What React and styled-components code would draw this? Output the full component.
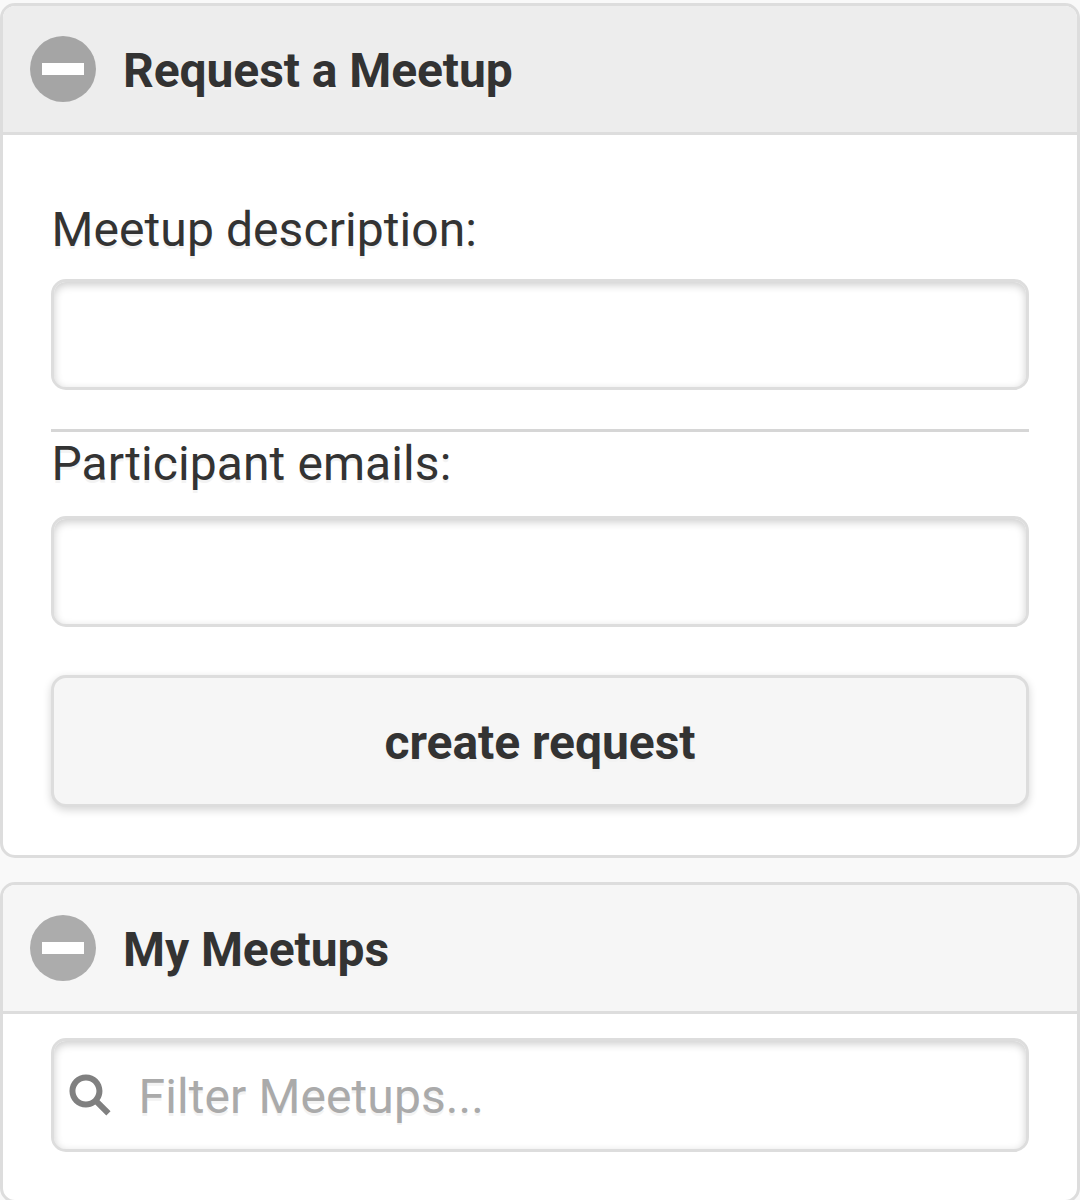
import React from "react";
import styled, { createGlobalStyle } from "styled-components";

const GlobalStyle = createGlobalStyle`
  *, *::before, *::after { box-sizing: border-box; }
  body {
    margin: 0;
    background: #f9f9f9;
    color: #333;
    font-family: Roboto, "Liberation Sans", sans-serif;
    font-size: 48px;
    line-height: 60px;
    text-shadow: 0 3px 0 #f3f3f3;
  }
`;

const Page = styled.main`
  display: flex;
  flex-direction: column;
  gap: 24px;
  height: 1200px;
  padding-top: 3px;
  overflow: hidden;
`;

const Panel = styled.section`
  flex: none;
  border: 3px solid #ddd;
  border-radius: 15px;
  background: #fff;
  overflow: hidden;
`;

const PanelHeader = styled.header`
  display: flex;
  align-items: center;
  gap: 27px;
  height: 129px;
  padding-left: 27px;
  border-bottom: 3px solid #ddd;
  background: ${({ $active }) => ($active ? "#ededed" : "#f6f6f6")};
`;

const MinusDisc = styled.span`
  display: flex;
  align-items: center;
  justify-content: center;
  width: 66px;
  height: 66px;
  border-radius: 50%;
  background: rgba(0, 0, 0, 0.3);

  &::before {
    content: "";
    width: 42px;
    height: 12px;
    background: #fff;
  }
`;

const PanelTitle = styled.h2`
  margin: 0;
  padding-top: 3px;
  font-size: 48px;
  font-weight: 700;
  letter-spacing: -0.08px;
`;

const Form = styled.form`
  display: flex;
  flex-direction: column;
  padding: 65px 48px 48px;
`;

const Label = styled.label`
  margin-bottom: ${({ $gap }) => $gap}px;
  padding-left: 0.5px;
  letter-spacing: 0.08px;
`;

const fieldFrame = `
  border: 3px solid #ddd;
  border-radius: 15px;
  background: #fff;
  box-shadow: inset 0 3px 8px rgba(0, 0, 0, 0.2);
`;

const TextInput = styled.input`
  ${fieldFrame}
  width: 100%;
  height: 111px;
  padding: 0 18px;
  color: inherit;
  font: inherit;
  outline: none;
`;

const Divider = styled.hr`
  width: 100%;
  height: 3px;
  margin: 39px 0 2px;
  border: 0;
  background: #d6d6d6;
`;

const SubmitButton = styled.button`
  height: 132px;
  margin-top: 48px;
  padding: 3px 0 0;
  border: 3px solid #ddd;
  border-radius: 15px;
  background: #f6f6f6;
  box-shadow: 0 3px 9px rgba(0, 0, 0, 0.17);
  color: #333;
  font: inherit;
  font-weight: 700;
  letter-spacing: -0.05px;
  text-shadow: inherit;
`;

const SearchArea = styled.div`
  padding: 24px 48px 48px;
`;

const SearchField = styled.label`
  ${fieldFrame}
  display: flex;
  align-items: center;
  gap: 27px;
  height: 114px;
  padding-left: 15px;
`;

const SearchInput = styled.input`
  flex: 1;
  min-width: 0;
  height: 60px;
  margin-top: 3px;
  padding: 0 0 0 0.5px;
  border: 0;
  outline: none;
  background: transparent;
  color: inherit;
  font: inherit;
  letter-spacing: 0.1px;
  text-shadow: inherit;

  &::placeholder {
    color: #aaa;
    opacity: 1;
  }
`;

const SearchIcon = () => (
  <svg width="42" height="42" viewBox="0 0 14 14" fill="#808080" aria-hidden="true">
    <path d="M10.171,8.766c0.617-0.888,0.979-1.964,0.979-3.126c0-3.037-2.463-5.5-5.5-5.5s-5.5,2.463-5.5,5.5s2.463,5.5,5.5,5.5c1.152,0,2.223-0.355,3.104-0.962l3.684,3.683l1.414-1.414L10.171,8.766z M5.649,9.14c-1.933,0-3.5-1.567-3.5-3.5c0-1.933,1.567-3.5,3.5-3.5c1.933,0,3.5,1.567,3.5,3.5C9.149,7.573,7.582,9.14,5.649,9.14z" />
  </svg>
);

export default function App() {
  return (
    <Page>
      <GlobalStyle />
      <Panel>
        <PanelHeader $active>
          <MinusDisc />
          <PanelTitle>Request a Meetup</PanelTitle>
        </PanelHeader>
        <Form onSubmit={(event) => event.preventDefault()}>
          <Label htmlFor="description" $gap={19}>Meetup description:</Label>
          <TextInput id="description" />
          <Divider />
          <Label htmlFor="emails" $gap={22}>Participant emails:</Label>
          <TextInput id="emails" />
          <SubmitButton>create request</SubmitButton>
        </Form>
      </Panel>
      <Panel>
        <PanelHeader>
          <MinusDisc />
          <PanelTitle>My Meetups</PanelTitle>
        </PanelHeader>
        <SearchArea>
          <SearchField>
            <SearchIcon />
            <SearchInput placeholder="Filter Meetups..." />
          </SearchField>
        </SearchArea>
      </Panel>
    </Page>
  );
}
